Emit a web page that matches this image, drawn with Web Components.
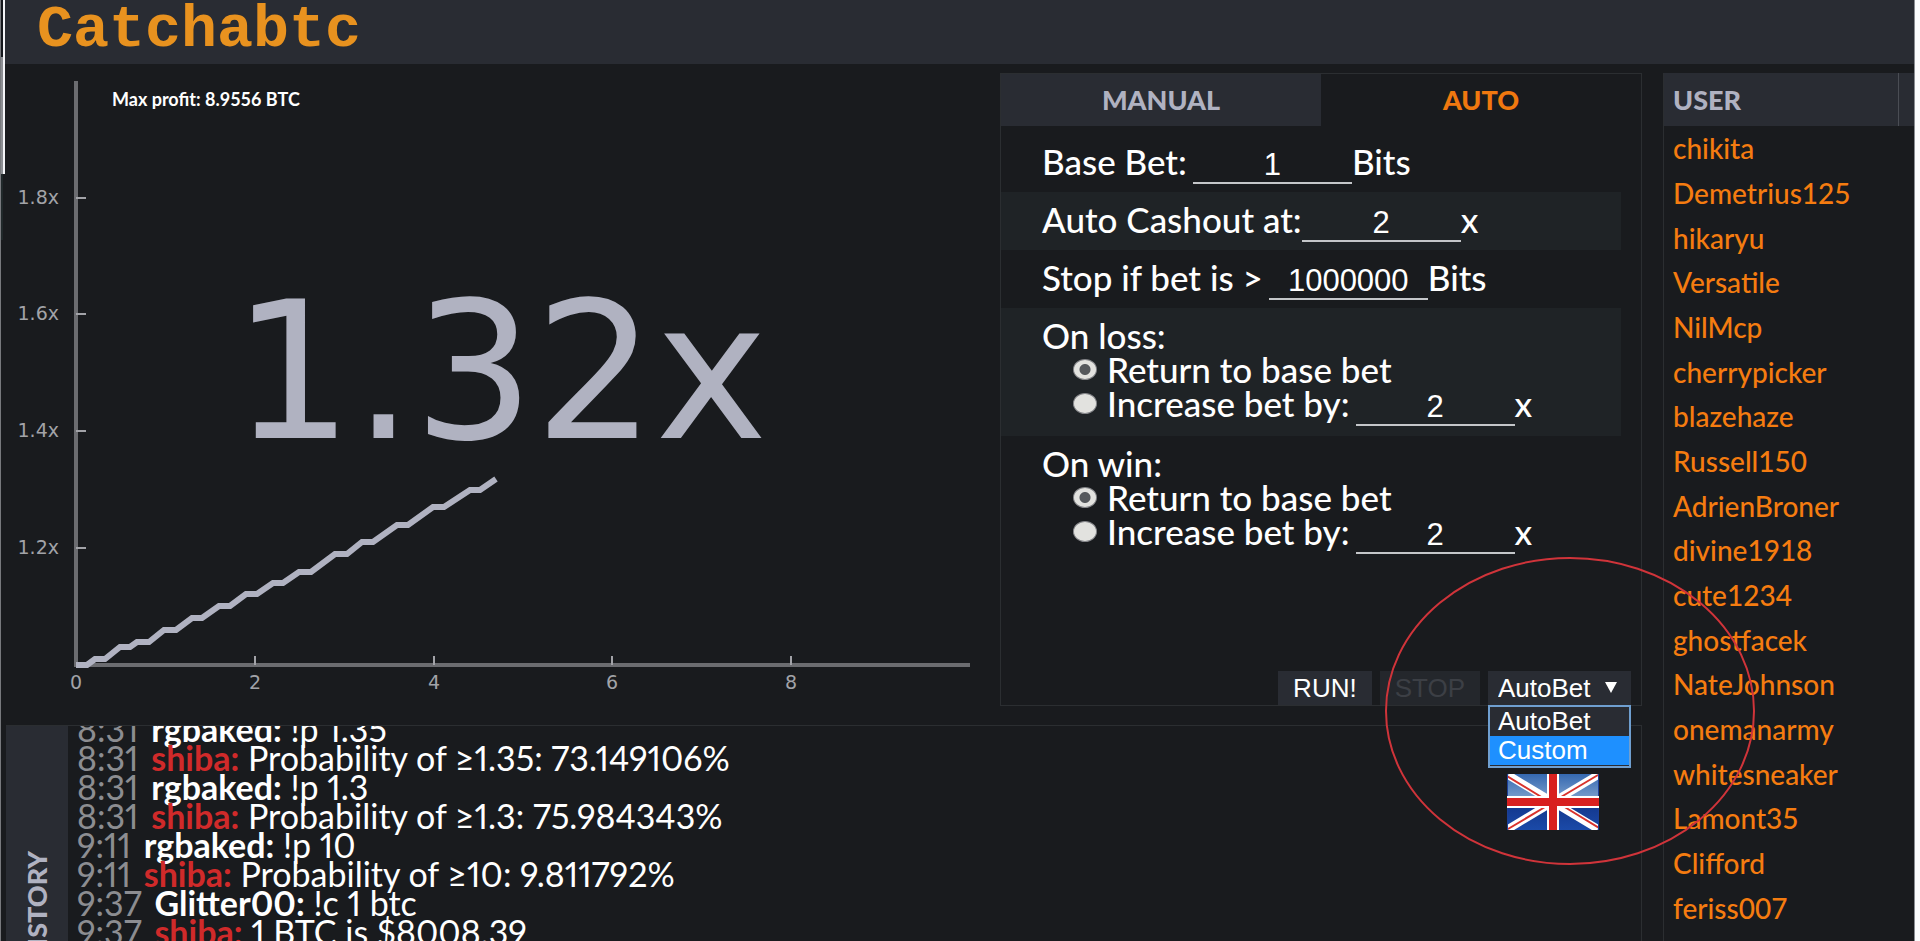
<!DOCTYPE html>
<html lang="en">
<head>
<meta charset="utf-8">
<title>Catchabtc</title>
<style>
  html, body { margin: 0; height: 100%; background: #191b1e; }
  body { font-family: Lato, "Open Sans", sans-serif; color: #fff; overflow: hidden; }
</style>
</head>
<body>
<game-app></game-app>
<script>
class Base extends HTMLElement {
  constructor() {
    super();
    this.attachShadow({ mode: 'open' }).innerHTML = '<style>*{box-sizing:border-box}</style>' + this.view();
  }
}

customElements.define('site-header', class extends Base {
  view() {
    return `<style>
      :host { display: block; background: #292c33; padding: 0 32px; }
      h1 { margin: 0; font: bold 60px/60px "Liberation Mono", monospace; color: #e8921f; padding-bottom: 4px; white-space: nowrap; }
    </style><h1><slot></slot></h1>`;
  }
});

customElements.define('crash-chart', class extends Base {
  view() {
    const xs = [[0, 76], [2, 255], [4, 434], [6, 612], [8, 791]];
    const ys = [['1.8x', 198], ['1.6x', 314], ['1.4x', 431], ['1.2x', 548]];
    return `<style>
      :host { display: block; min-width: 0; }
      svg { display: block; width: 100%; height: 100%; font-family: "DejaVu Sans", Verdana, sans-serif; }
      .tick { font-size: 19px; fill: #a2a3a8; }
      .axis { stroke: #6b6c70; stroke-width: 4; }
      .mark { stroke: #a2a3a8; stroke-width: 2; }
      .value { font-size: 190px; fill: #b0b2c1; text-anchor: middle; }
      .line { fill: none; stroke: #b0b2c1; stroke-width: 6; }
      .profit { font: 700 18px Lato, sans-serif; fill: #fff; }
    </style>
    <svg viewBox="6 73 994 633" preserveAspectRatio="xMinYMin meet">
      <path class="axis" d="M76 81V665M74 665H970"/>
      ${ys.map(([t, y]) => `<path class="mark" d="M76 ${y}H86"/><text class="tick" text-anchor="end" x="59" y="${y + 6}">${t}</text>`).join('')}
      ${xs.map(([t, x]) => `${t ? `<path class="mark" d="M${x} 656V665"/>` : ''}<text class="tick" text-anchor="middle" x="${x}" y="689">${t}</text>`).join('')}
      <polyline class="line" points="76,665 87,665 95,659 105,659 120,647 130,647 137,642 149,642 164,630 176,630 192,618 202,618 219,606 230,606 246,594 257,594 273,583 283,583 299,572 311,572 335,554 347,554 362,542 373,542 397,525 408,525 433,507 444,507 470,490 480,490 496,479"/>
      <text class="value" x="500" y="438">1.32x</text>
      <text class="profit" x="112" y="106">Max profit: 8.9556 BTC</text>
    </svg>`;
  }
});

customElements.define('bet-row', class extends Base {
  view() {
    return `<style>
      :host { display: block; margin-right: 20px; padding: 10px 0 8px 41px; }
      :host([shaded]) { background: #1f2326; }
      :host([group]) { padding: 10px 0 10px 41px; }
    </style><slot></slot>`;
  }
});

customElements.define('bet-mode', class extends Base {
  view() {
    return `<style>
      :host { display: block; position: relative; }
      select { appearance: none; display: block; width: 143px; height: 34px; margin: 0; padding: 0 10px; border: 0; border-radius: 0;
        background: #292c33; color: #fff; font: 26px/34px "Liberation Sans", Arial, sans-serif; }
      .arrow { position: absolute; right: 14px; top: 11px; width: 12px; height: 11px; background: #fff; clip-path: polygon(0 0, 100% 0, 50% 100%); pointer-events: none; }
      ul { position: absolute; top: 100%; left: 0; right: 0; margin: 0; padding: 0 0 1px; list-style: none; border: 2px solid #6f9fd0;
        background: #292c33; font: 26px/29px "Liberation Sans", Arial, sans-serif; }
      li { padding-left: 8px; }
      li[aria-selected=true] { background: #1e90ff; }
    </style>
    <select aria-label="Betting mode"><option>AutoBet</option><option>Custom</option></select>
    <span class="arrow"></span>
    <ul role="listbox"><li role="option">AutoBet</li><li role="option" aria-selected="true">Custom</li></ul>`;
  }
});

customElements.define('bet-panel', class extends Base {
  view() {
    const group = (id, title, shaded) => `
      <bet-row group ${shaded}>
        <div class="title">${title}</div>
        <div class="opt"><input type="radio" name="${id}" id="${id}-r" checked><label for="${id}-r">Return to base bet</label></div>
        <div class="opt"><input type="radio" name="${id}" id="${id}-i"><label for="${id}-i">Increase bet by:</label><input type="text" class="gap" aria-label="${title} multiplier" value="2"><span>x</span></div>
      </bet-row>`;
    return `<style>
      :host { display: flex; flex-direction: column; position: relative; z-index: 1; border: 1px solid #2b2e31; font-size: 35px; line-height: 34px; font-weight: 500; white-space: nowrap; }
      .tabs { display: grid; grid-template-columns: 1fr 1fr; margin-bottom: 8px; }
      .tabs button { margin: 0; border: 0; padding: 0; background: #292c33; color: #b0b2c1; font: 900 27px/52px Lato, sans-serif; }
      .tabs button.on { background: none; color: #f0780f; }
      .field, .opt { display: flex; align-items: baseline; }
      input[type=text] { width: 159px; margin: 0; padding: 0; border: 0; border-bottom: 2px solid #c4c6c9; border-radius: 0; background: none; color: #fff;
        font: 31px/34px "Liberation Sans", Arial, sans-serif; height: 36px; text-align: center; }
      input.gap { margin-left: 6px; }
      .opt { padding-left: 31px; }
      input[type=radio] { appearance: none; width: 24px; height: 21px; margin: 7px 10px 0 0; border-radius: 50%; flex: none; align-self: flex-start;
        border: 1px solid #85868a; background: #e2e2df; }
      input[type=radio]:checked { background: radial-gradient(circle, #55585c 0 5px, #e2e2df 6px); }
      .bar { display: flex; justify-content: flex-end; gap: 8px; margin-top: auto; padding-right: 10px; }
      .bar button { height: 34px; border: 0; padding: 0 15px; background: #292c33; color: #fff; font: 26px/34px "Liberation Sans", Arial, sans-serif; }
      .bar button:disabled { color: #3c3f45; background: #24272c; }
      .ring { position: absolute; right: -116px; bottom: -161px; width: 373px; height: 309px; pointer-events: none; }
    </style>
    <div class="tabs"><button type="button">MANUAL</button><button type="button" class="on">AUTO</button></div>
    <bet-row><div class="field"><label for="base">Base Bet:</label><input type="text" class="gap" id="base" value="1"><span>Bits</span></div></bet-row>
    <bet-row shaded><div class="field"><label for="cash">Auto Cashout at:</label><input type="text" id="cash" value="2"><span>x</span></div></bet-row>
    <bet-row><div class="field"><label for="stop">Stop if bet is &gt;</label><input type="text" class="gap" id="stop" value="1000000"><span>Bits</span></div></bet-row>
    ${group('loss', 'On loss:', 'shaded')}
    ${group('win', 'On win:', '')}
    <div class="bar"><button type="button">RUN!</button><button type="button" disabled>STOP</button><bet-mode></bet-mode></div>
    <svg class="ring" viewBox="0 0 373 309"><ellipse cx="186" cy="154" rx="184" ry="153" fill="none" stroke="#d0343a" stroke-width="2"/></svg>`;
  }
});

customElements.define('flag-button', class extends Base {
  view() {
    return `<style>
      :host { display: block; }
      button { display: block; margin: 0; padding: 0; border: 0; background: none; }
      svg { display: block; }
    </style>
    <button type="button" aria-label="English"><svg width="92" height="56" viewBox="0 0 92 56">
      <defs><linearGradient id="b" x2="0" y2="1"><stop offset="0" stop-color="#3568b0"/><stop offset=".48" stop-color="#7fa3cf"/><stop offset=".5" stop-color="#12358a"/><stop offset="1" stop-color="#1b4aa8"/></linearGradient></defs>
      <rect width="92" height="56" fill="url(#b)"/>
      <path d="M1 1L91 55M91 1L1 55" stroke="#fff" stroke-width="8"/>
      <path d="M0 2L36 24M91 1L54 23M92 54L56 32M1 55L38 33" stroke="#d8322c" stroke-width="2"/>
      <path d="M0 0V56M92 0V56" stroke="#1c3f96" stroke-width="2"/>
      <path d="M46 0V56M0 28H92" stroke="#fff" stroke-width="12"/>
      <path d="M46 0V56M0 28H92" stroke="#d8201f" stroke-width="8"/>
    </svg></button>`;
  }
});

customElements.define('chat-panel', class extends Base {
  view() {
    const log = [
      ['8:31', 'rgbaked', '!p 1.35'],
      ['8:31', 'shiba', 'Probability of ≥1.35: 73.149106%'],
      ['8:31', 'rgbaked', '!p 1.3'],
      ['8:31', 'shiba', 'Probability of ≥1.3: 75.984343%'],
      ['9:11', 'rgbaked', '!p 10'],
      ['9:11', 'shiba', 'Probability of ≥10: 9.811792%'],
      ['9:37', 'Glitter00', '!c 1 btc'],
      ['9:37', 'shiba', '1 BTC is $8008.39']];
    return `<style>
      :host { display: flex; overflow: hidden; border: 1px solid #2b2e31; border-left: 0; border-bottom: 0; min-height: 0; }
      .side { flex: none; width: 62px; margin: 0; padding: 125px 0 0; border: 0; background: #292c33; display: flex; flex-direction: column; align-items: center; justify-content: flex-start;
        color: #b0b2c1; font: 900 27px/30px Lato, sans-serif; }
      .side span { writing-mode: vertical-rl; transform: rotate(180deg); }
      .log { flex: 1; min-width: 0; overflow: hidden; padding-left: 9px; }
      ol { list-style: none; margin: -12px 0 0; padding: 0; font-size: 34px; line-height: 29px; font-variant-numeric: proportional-nums; white-space: nowrap; }
      time { color: #8c8d91; margin-right: 4px; }
      .bot { color: #d02a2a; }
      flag-button { margin: 48px 42px 0 0; }
    </style>
    <button type="button" class="side"><span>HISTORY</span></button>
    <div class="log"><ol>${log.map(([t, n, m]) => `<li><time>${t}</time> <b class="${n === 'shiba' ? 'bot' : ''}">${n}:</b> ${m}</li>`).join('')}</ol></div>
    <flag-button></flag-button>`;
  }
});

customElements.define('user-list', class extends Base {
  view() {
    const users = 'chikita Demetrius125 hikaryu Versatile NilMcp cherrypicker blazehaze Russell150 AdrienBroner divine1918 cute1234 ghostfacek NateJohnson onemanarmy whitesneaker Lamont35 Clifford feriss007'.split(' ');
    return `<style>
      :host { display: block; border-left: 1px solid #2b2e31; padding-bottom: 11px; min-height: 0; }
      table { width: 100%; height: 100%; border-collapse: collapse; font-size: 28px; font-weight: 500; line-height: 32px; }
      th { height: 53px; text-align: left; padding: 0 0 0 9px; background: #292c33; color: #b0b2c1; font: 900 27px/52px Lato, sans-serif; }
      th + th { width: 16px; padding: 0; border-left: 1px solid #4a4d54; }
      td { padding: 0 0 0 9px; }
      a { color: #f57c10; text-decoration: none; }
    </style>
    <table><thead><tr><th>USER</th><th></th></tr></thead>
    <tbody>${users.map(u => `<tr><td colspan="2"><a href="#${u}">${u}</a></td></tr>`).join('')}</tbody></table>`;
  }
});

customElements.define('game-app', class extends Base {
  view() {
    return `<style>
      :host { display: grid; grid-template-columns: 5px minmax(0, 1fr) 6px; height: 100vh; }
      .edge { background: linear-gradient(#f4f5f8, #f4f5f8) 3px 0/2px 174px no-repeat, linear-gradient(#14171c 57px, #8b8d92 57px 174px, #20282a 174px 240px, transparent 240px) 1px 0/2px 100% no-repeat, linear-gradient(#77797d, #77797d) 0 0/1px 100% no-repeat; }
      .end { background: #fbfcfd; border-left: 1px solid #8a8d92; }
      .page { display: flex; flex-direction: column; min-height: 0; }
      .cols { flex: 1; min-height: 0; display: grid; grid-template-columns: minmax(0, 1fr) 251px; gap: 21px; padding: 9px 0 0 1px; }
      .main { display: flex; flex-direction: column; gap: 19px; min-height: 0; }
      .top { display: grid; grid-template-columns: minmax(0, 1fr) 642px; min-height: 633px; }
      crash-chart { height: 633px; }
      chat-panel { flex: 1; }
    </style>
    <div class="edge"></div>
    <div class="page">
      <site-header>Catchabtc</site-header>
      <div class="cols">
        <div class="main">
          <div class="top"><crash-chart></crash-chart><bet-panel></bet-panel></div>
          <chat-panel></chat-panel>
        </div>
        <user-list></user-list>
      </div>
    </div>
    <div class="end"></div>`;
  }
});
</script>
</body>
</html>
